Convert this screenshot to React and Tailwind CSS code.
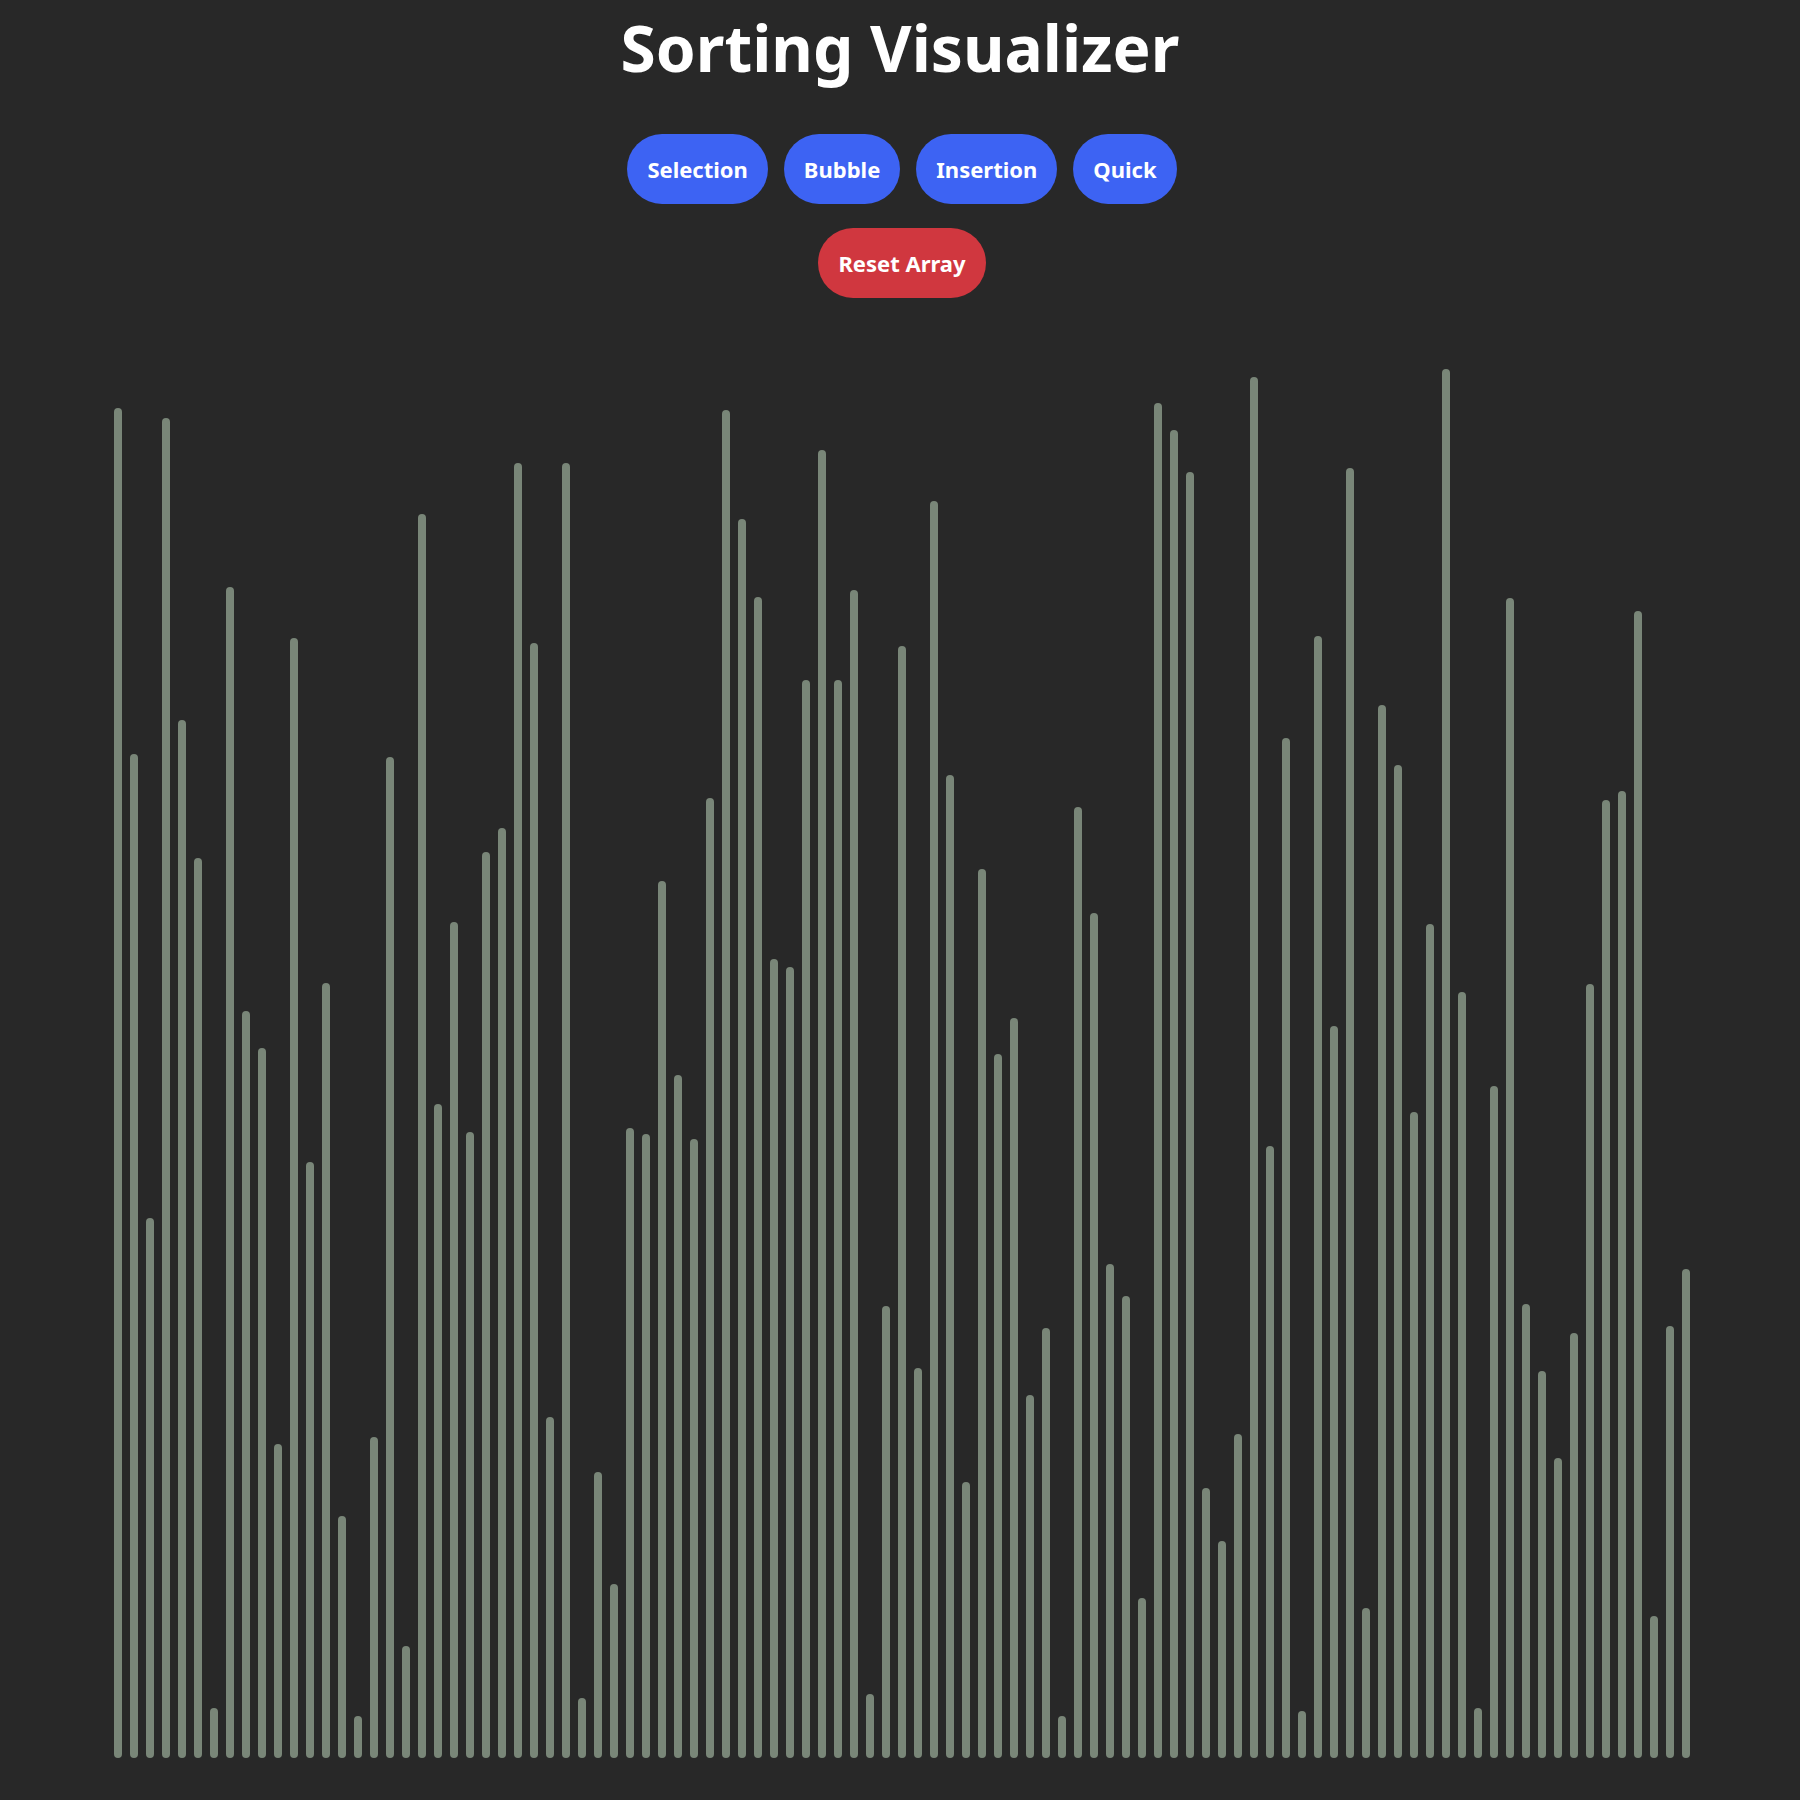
import React, { useState } from 'react';

// bar heights in px, read off the reference
const initialBars = [
  1350, 1004, 540, 1340, 1038, 900, 50, 1171, 747, 710,
  314, 1120, 596, 775, 242, 42, 321, 1001, 112, 1244,
  654, 836, 626, 906, 930, 1295, 1115, 341, 1295, 60,
  286, 174, 630, 624, 877, 683, 619, 960, 1348, 1239,
  1161, 799, 791, 1078, 1308, 1078, 1168, 64, 452, 1112,
  390, 1257, 983, 276, 889, 704, 740, 363, 430, 42,
  951, 845, 494, 462, 160, 1355, 1328, 1286, 270, 217,
  324, 1381, 612, 1020, 47, 1122, 732, 1290, 150, 1053,
  993, 646, 834, 1389, 766, 50, 672, 1160, 454, 387,
  300, 425, 774, 958, 967, 1147, 142, 432, 489,
];

const algorithms = ['Selection', 'Bubble', 'Insertion', 'Quick'];

const App = () => {
  const [bars, setBars] = useState(initialBars);

  const resetArray = () => {
    setBars(initialBars.map(() => Math.floor(Math.random() * 1350) + 40));
  };

  return (
    <div className="min-h-screen w-full bg-[#282828] flex flex-col items-center font-['Noto_Sans',sans-serif]">
      {/* Header */}
      <h1 className="mt-[4px] text-[64px] leading-[87px] font-bold text-white">Sorting Visualizer</h1>

      {/* Algorithm buttons */}
      <div className="mt-[43px] pl-[4px] flex items-center gap-4">
        {algorithms.map((name) => (
          <button
            key={name}
            className="h-[70px] px-5 rounded-full bg-[#3d63f3] text-white text-[22px] font-bold leading-none"
          >
            {name}
          </button>
        ))}
      </div>

      <button
        onClick={resetArray}
        className="mt-6 ml-[4px] h-[70px] px-5 rounded-full bg-[#d0373f] text-white text-[22px] font-bold leading-none"
      >
        Reset Array
      </button>

      {/* Bars */}
      <div className="mt-[60px] h-[1400px] pl-[4px] flex items-end justify-center gap-2">
        {bars.map((h, i) => (
          <div key={i} className="w-2 rounded-full bg-[#798678]" style={{ height: `${h}px` }} />
        ))}
      </div>
    </div>
  );
};

export default App;
